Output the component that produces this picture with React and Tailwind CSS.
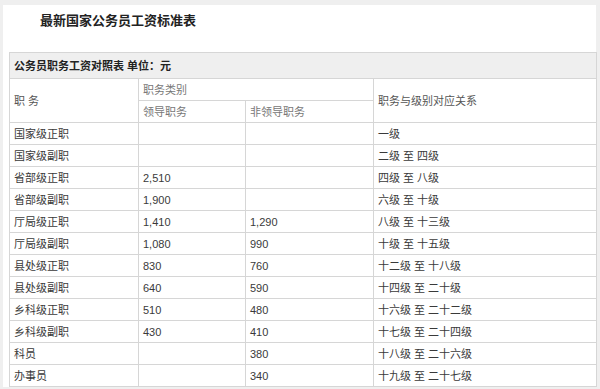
const rows = [
  ["国家级正职", "", "", "一级"],
  ["国家级副职", "", "", "二级 至 四级"],
  ["省部级正职", "2,510", "", "四级 至 八级"],
  ["省部级副职", "1,900", "", "六级 至 十级"],
  ["厅局级正职", "1,410", "1,290", "八级 至 十三级"],
  ["厅局级副职", "1,080", "990", "十级 至 十五级"],
  ["县处级正职", "830", "760", "十二级 至 十八级"],
  ["县处级副职", "640", "590", "十四级 至 二十级"],
  ["乡科级正职", "510", "480", "十六级 至 二十二级"],
  ["乡科级副职", "430", "410", "十七级 至 二十四级"],
  ["科员", "", "380", "十八级 至 二十六级"],
  ["办事员", "", "340", "十九级 至 二十七级"],
]

const cell = "border border-[#d6d6d6] px-[4px] text-left align-middle"

const App = () => {
  return (
    <div
      className="w-[600px] h-[389px] bg-[#efefef] pt-[5px] pl-[3px] overflow-hidden"
      style={{ fontFamily: '"Liberation Sans", "Noto Sans CJK SC", sans-serif' }}
    >
      <div className="w-[593px] h-[382px] bg-white pl-[6px]">
        <h1 className="pl-[31px] pt-[6px] h-[47px] text-[13px] leading-[20px] font-bold text-[#222]">
          最新国家公务员工资标准表
        </h1>
        <table className="table-fixed border-collapse w-[587px] text-[11px] leading-[14px] text-[#3a3a3a]">
          <colgroup>
            <col className="w-[129px]" />
            <col className="w-[107px]" />
            <col className="w-[128px]" />
            <col className="w-[223px]" />
          </colgroup>
          <thead>
            <tr className="h-[26px] bg-[#efefef]">
              <th colSpan={4} className={`${cell} font-bold text-[#222]`}>
                公务员职务工资对照表 单位：元
              </th>
            </tr>
            <tr className="h-[22px]">
              <th rowSpan={2} className={`${cell} font-normal text-[#555]`}>职 务</th>
              <th colSpan={2} className={`${cell} font-normal text-[#777]`}>职务类别</th>
              <th rowSpan={2} className={`${cell} font-normal text-[#555]`}>职务与级别对应关系</th>
            </tr>
            <tr className="h-[22px]">
              <th className={`${cell} font-normal text-[#777]`}>领导职务</th>
              <th className={`${cell} font-normal text-[#777]`}>非领导职务</th>
            </tr>
          </thead>
          <tbody>
            {rows.map((r) => (
              <tr key={r[0]} className="h-[22px]">
                {r.map((c, i) => (
                  <td key={i} className={cell}>{c}</td>
                ))}
              </tr>
            ))}
          </tbody>
        </table>
      </div>
    </div>
  )
}

export default App
